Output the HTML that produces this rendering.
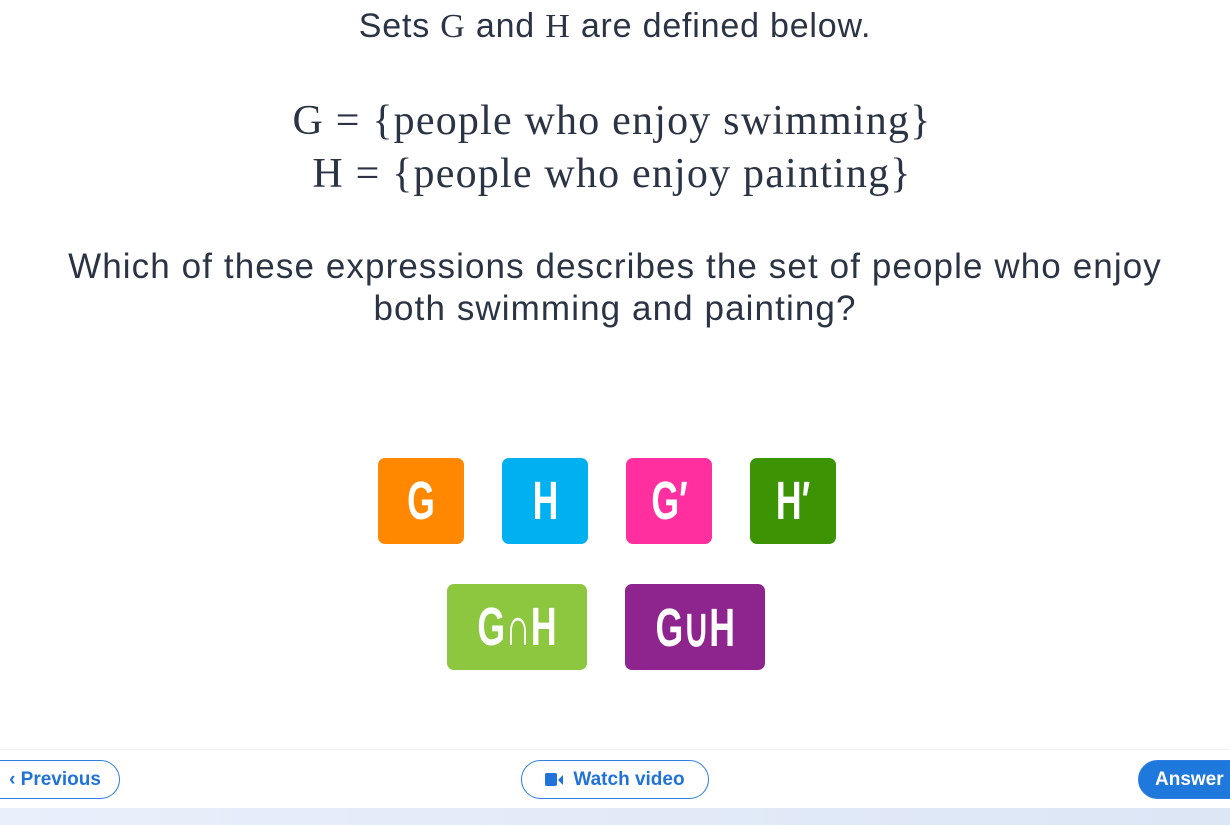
<!DOCTYPE html>
<html><head><style>
body{margin:0;width:1230px;height:825px;background:#fff;font-family:"Liberation Sans",sans-serif;color:#2b3445;position:relative;overflow:hidden}
.t{position:absolute;left:0;width:1230px;text-align:center;white-space:nowrap}
.serif{font-family:"Liberation Serif",serif}
.b{position:absolute;border-radius:7px;color:#fff;display:flex;align-items:center;justify-content:center;font-family:"Liberation Sans Narrow","Liberation Sans",sans-serif;font-size:54px;font-weight:bold}
.b span{display:inline-block;transform:scaleX(.66)}
.btn{position:absolute;top:760px;height:39px;border:1.5px solid #2f7de0;border-radius:20px;box-sizing:border-box;color:#2173d9;font-weight:bold;font-size:19px;display:flex;align-items:center;justify-content:center}
</style></head><body>
<div class="t" style="top:7px;font-size:34px;letter-spacing:0.8px">Sets <span class="serif">G</span> and <span class="serif">H</span> are defined below.</div>
<div class="t serif" style="top:97px;font-size:42px;letter-spacing:1.2px;left:-3px">G&nbsp;= {people who enjoy swimming}</div>
<div class="t serif" style="top:150px;font-size:42px;letter-spacing:1.2px;left:-3px">H&nbsp;= {people who enjoy painting}</div>
<div class="t" style="top:246px;font-size:35px;line-height:42px;letter-spacing:1.1px">Which of these expressions describes the set of people who enjoy<br>both swimming and painting?</div>
<div class="b" style="left:378px;top:458px;width:86px;height:86px;background:#ff8800"><span>G</span></div>
<div class="b" style="left:502px;top:458px;width:86px;height:86px;background:#00b0f0"><span>H</span></div>
<div class="b" style="left:626px;top:458px;width:86px;height:86px;background:#ff2fa0"><span>G′</span></div>
<div class="b" style="left:750px;top:458px;width:86px;height:86px;background:#3c9304"><span>H′</span></div>
<div class="b" style="left:447px;top:584px;width:140px;height:86px;background:#8dc63f"><span>G∩H</span></div>
<div class="b" style="left:625px;top:584px;width:140px;height:86px;background:#8e248e"><span>G∪H</span></div>
<div style="position:absolute;top:749px;left:0;width:1230px;height:1px;background:#eef0f4"></div>
<div style="position:absolute;top:808px;left:0;width:1230px;height:17px;background:linear-gradient(90deg,#e9effb,#dce6f5)"></div>
<div class="btn" style="left:-20px;width:140px;padding-left:10px">‹&nbsp;Previous</div>
<div class="btn" style="left:521px;width:188px"><span style="display:inline-block;width:12px;height:13px;background:#2173d9;border-radius:2px;margin-right:1px"></span><span style="display:inline-block;width:0;height:0;border-top:5px solid transparent;border-bottom:5px solid transparent;border-right:5px solid #2173d9;margin-right:10px"></span>Watch video</div>
<div class="btn" style="left:1138px;width:120px;background:#1f78dc;color:#fff;justify-content:flex-start;padding-left:16px">Answer</div>
</body></html>
